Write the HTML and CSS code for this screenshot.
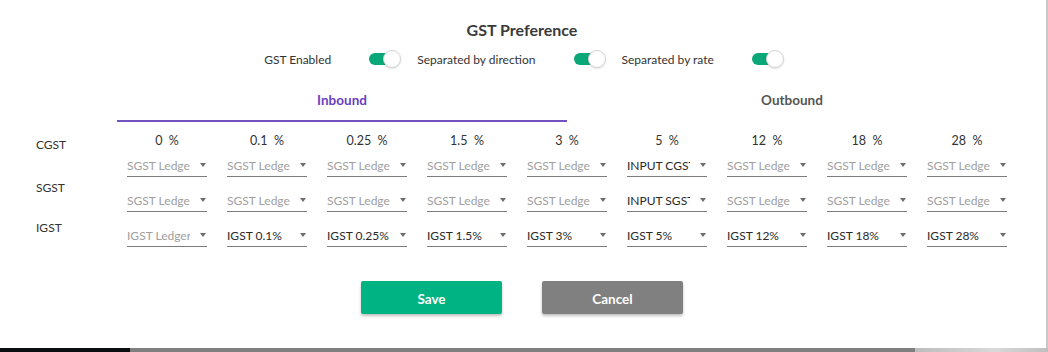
FILE: index.html
```html
<!DOCTYPE html>
<html>
<head>
<meta charset="utf-8">
<link rel="stylesheet" href="styles.css">
</head>
<body>
<div class="dialog">
  <div class="title">GST Preference</div>
  <div class="toggles">
    <span class="tlabel">GST Enabled</span><span class="switch"><span class="knob"></span></span>
    <span class="tlabel">Separated by direction</span><span class="switch"><span class="knob"></span></span>
    <span class="tlabel">Separated by rate</span><span class="switch"><span class="knob"></span></span>
  </div>
  <div class="tabs">
    <div class="tab active">Inbound</div>
    <div class="tab">Outbound</div>
  </div>
  <div class="grid">
    <div class="rowlabels">
      <div class="rl rl1">CGST</div>
      <div class="rl rl2">SGST</div>
      <div class="rl rl3">IGST</div>
    </div>
    <div class="col">
      <div class="head">0&nbsp; %</div>
      <div class="sel ph"><span class="txt">SGST Ledger</span><span class="arr"></span></div>
      <div class="sel ph"><span class="txt">SGST Ledger</span><span class="arr"></span></div>
      <div class="sel ph"><span class="txt">IGST Ledger</span><span class="arr"></span></div>
    </div>
    <div class="col">
      <div class="head">0.1&nbsp; %</div>
      <div class="sel ph"><span class="txt">SGST Ledger</span><span class="arr"></span></div>
      <div class="sel ph"><span class="txt">SGST Ledger</span><span class="arr"></span></div>
      <div class="sel"><span class="txt">IGST 0.1%</span><span class="arr"></span></div>
    </div>
    <div class="col">
      <div class="head">0.25&nbsp; %</div>
      <div class="sel ph"><span class="txt">SGST Ledger</span><span class="arr"></span></div>
      <div class="sel ph"><span class="txt">SGST Ledger</span><span class="arr"></span></div>
      <div class="sel"><span class="txt">IGST 0.25%</span><span class="arr"></span></div>
    </div>
    <div class="col">
      <div class="head">1.5&nbsp; %</div>
      <div class="sel ph"><span class="txt">SGST Ledger</span><span class="arr"></span></div>
      <div class="sel ph"><span class="txt">SGST Ledger</span><span class="arr"></span></div>
      <div class="sel"><span class="txt">IGST 1.5%</span><span class="arr"></span></div>
    </div>
    <div class="col">
      <div class="head">3&nbsp; %</div>
      <div class="sel ph"><span class="txt">SGST Ledger</span><span class="arr"></span></div>
      <div class="sel ph"><span class="txt">SGST Ledger</span><span class="arr"></span></div>
      <div class="sel"><span class="txt">IGST 3%</span><span class="arr"></span></div>
    </div>
    <div class="col">
      <div class="head">5&nbsp; %</div>
      <div class="sel"><span class="txt">INPUT CGST</span><span class="arr"></span></div>
      <div class="sel"><span class="txt">INPUT SGST</span><span class="arr"></span></div>
      <div class="sel"><span class="txt">IGST 5%</span><span class="arr"></span></div>
    </div>
    <div class="col">
      <div class="head">12&nbsp; %</div>
      <div class="sel ph"><span class="txt">SGST Ledger</span><span class="arr"></span></div>
      <div class="sel ph"><span class="txt">SGST Ledger</span><span class="arr"></span></div>
      <div class="sel"><span class="txt">IGST 12%</span><span class="arr"></span></div>
    </div>
    <div class="col">
      <div class="head">18&nbsp; %</div>
      <div class="sel ph"><span class="txt">SGST Ledger</span><span class="arr"></span></div>
      <div class="sel ph"><span class="txt">SGST Ledger</span><span class="arr"></span></div>
      <div class="sel"><span class="txt">IGST 18%</span><span class="arr"></span></div>
    </div>
    <div class="col">
      <div class="head">28&nbsp; %</div>
      <div class="sel ph"><span class="txt">SGST Ledger</span><span class="arr"></span></div>
      <div class="sel ph"><span class="txt">SGST Ledger</span><span class="arr"></span></div>
      <div class="sel"><span class="txt">IGST 28%</span><span class="arr"></span></div>
    </div>
  </div>
  <div class="buttons">
    <button class="btn save">Save</button>
    <button class="btn cancel">Cancel</button>
  </div>
</div>
<div class="strip">
  <div class="seg dark"></div>
  <div class="seg mid"></div>
  <div class="seg light"></div>
</div>
</body>
</html>
```

FILE: styles.css
```css
* { box-sizing: border-box; }
html, body { margin: 0; padding: 0; }
body {
  width: 1048px;
  height: 352px;
  overflow: hidden;
  background: #ffffff;
  font-family: Lato, "Open Sans", sans-serif;
  color: #333333;
}
.dialog {
  width: 1048px;
  height: 348px;
  background: #ffffff;
  border-right: 2px solid #c9c9c9;
  display: flex;
  flex-direction: column;
}
.title {
  margin-top: 20px;
  height: 20px;
  line-height: 20px;
  text-align: center;
  font-size: 16px;
  font-weight: 700;
  color: #3a3a3a;
  padding-right: 2px;
}
.toggles {
  margin-top: 10px;
  height: 18px;
  display: flex;
  justify-content: center;
  align-items: center;
  font-size: 12px;
  color: #333333;
  padding-left: 2px;
}
.tlabel { margin-right: 38px; }
.switch {
  position: relative;
  width: 32px;
  height: 18px;
  margin-right: 16px;
  display: inline-block;
}
.switch:last-child { margin-right: 0; }
.switch::before {
  content: "";
  position: absolute;
  left: 0;
  top: 3px;
  width: 28px;
  height: 12px;
  border-radius: 6px;
  background: #0aa779;
}
.knob {
  position: absolute;
  left: 14px;
  top: 0;
  width: 18px;
  height: 18px;
  border-radius: 50%;
  background: #ffffff;
  border: 1px solid #d4d4d4;
  box-shadow: 0 1px 2px rgba(0,0,0,0.12);
}
.tabs {
  margin-top: 12px;
  margin-left: 117px;
  width: 900px;
  display: flex;
}
.tab {
  width: 450px;
  height: 42px;
  line-height: 40px;
  text-align: center;
  font-size: 13.5px;
  font-weight: 700;
  color: #555555;
  border-bottom: 2px solid transparent;
}
.tab.active {
  color: #6a3fbf;
  border-bottom-color: #7352c4;
}
.grid {
  margin-top: 10px;
  display: flex;
  gap: 20px;
  font-size: 12px;
}
.rowlabels {
  width: 107px;
  padding-left: 36px;
  padding-top: 4px;
}
.rl { line-height: 18px; height: 18px; color: #333; }
.rl2 { margin-top: 25px; }
.rl3 { margin-top: 22px; }
.col {
  width: 80px;
  display: flex;
  flex-direction: column;
}
.head {
  height: 18px;
  line-height: 18px;
  text-align: center;
  color: #333;
  margin-bottom: 3px;
  font-size: 12.5px;
}
.sel {
  height: 24px;
  display: flex;
  align-items: center;
  border-bottom: 1px solid #7d7d7d;
  color: #2a2a2a;
  margin-bottom: 11px;
  font-size: 12px;
}
.sel:last-child { margin-bottom: 0; }
.sel.ph { color: #a0a0a0; }
.txt {
  width: 62.5px;
  overflow: hidden;
  white-space: nowrap;
  padding-top: 1px;
}
.arr {
  margin-left: 10.5px;
  width: 0;
  height: 0;
  border-left: 3.5px solid transparent;
  border-right: 3.5px solid transparent;
  border-top: 4px solid #6d6d6d;
}
.buttons {
  margin-top: 34px;
  display: flex;
  justify-content: center;
  gap: 40px;
  padding-right: 2px;
}
.btn {
  width: 141px;
  height: 33px;
  border: none;
  border-radius: 2px;
  color: #ffffff;
  font-family: Lato, "Open Sans", sans-serif;
  font-size: 13.5px;
  font-weight: 700;
  padding-top: 3px;
  box-shadow: 0 2px 3px rgba(0,0,0,0.25);
}
.save { background: #00b383; }
.cancel { background: #808080; }
.strip {
  height: 4px;
  display: flex;
}
.seg { height: 4px; }
.dark { width: 130px; background: #0a0e0e; }
.mid { width: 785px; background: #7f7f7f; }
.light { flex: 1; background: linear-gradient(90deg, #bdbdbd, #d9d9d9 60%, #bfbfbf); }
```
